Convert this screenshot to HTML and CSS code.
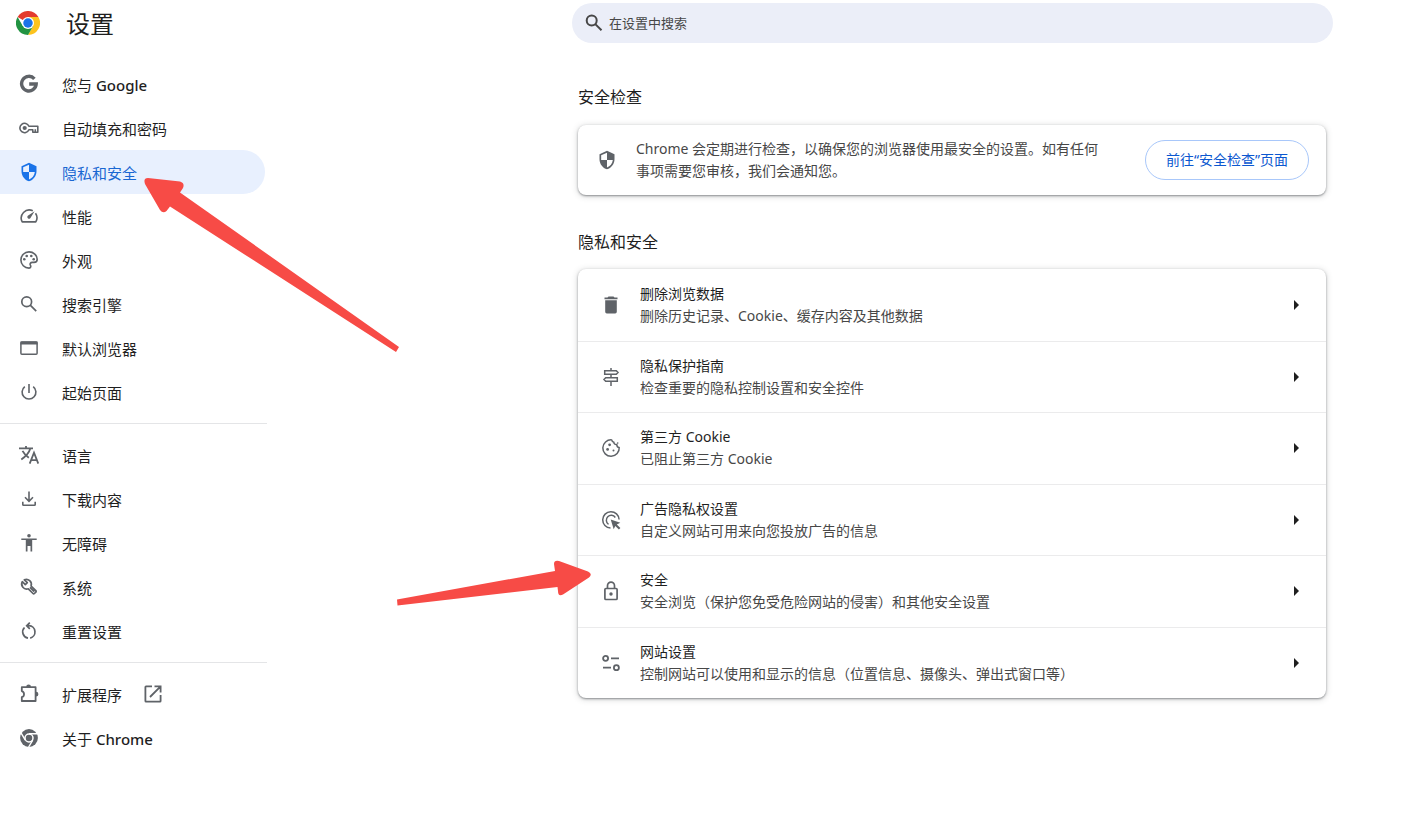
FILE: index.html
```html
<!DOCTYPE html>
<html lang="zh-CN">
<head>
<meta charset="utf-8">
<meta name="viewport" content="width=device-width, initial-scale=1">
<title>设置</title>
<link rel="stylesheet" href="styles.css">
</head>
<body>
<div class="page">
  <aside class="sidebar">
    <header class="brand">
      <svg class="brand-logo" viewBox="0 0 48 48" aria-hidden="true">
        <path fill="#e33b2e" d="M24 24 3.2 12A24 24 0 0 1 44.8 12L24 12Z"/>
        <path fill="#fcc31e" d="M24 12H44.8A24 24 0 0 1 24 48L34.4 30Z"/>
        <path fill="#229342" d="M34.4 30 24 48A24 24 0 0 1 3.2 12L13.6 30Z"/>
        <circle cx="24" cy="24" r="12" fill="#fff"/>
        <circle cx="24" cy="24" r="9.5" fill="#1a73e8"/>
      </svg>
      <h1 class="brand-title">设置</h1>
    </header>
    <nav class="nav" aria-label="设置">
      <a class="nav-item" href="#people">
        <svg class="icon" viewBox="0 0 20 20" aria-hidden="true"><path fill="none" stroke="currentColor" stroke-width="3.400" d="M15.400 4.800A7.300 7.300 0 1 0 17.200 10H10.200"/></svg>
        <span>您与 <b class="latin">Google</b></span></a>
      <a class="nav-item" href="#autofill">
        <svg class="icon" viewBox="0 0 20 20" aria-hidden="true"><path fill="none" stroke="currentColor" stroke-width="1.600" stroke-linejoin="round" d="M9.900 8.200A4.700 4.700 0 1 0 9.900 11.800H13.800V14.200H18.800V8.200ZM16.300 11.300V14.200"/><circle cx="5.700" cy="10" r="2.100" fill="currentColor"/></svg>
        <span>自动填充和密码</span></a>
      <a class="nav-item nav-item-selected" href="#privacy" aria-current="page">
        <svg class="icon" viewBox="0 0 24 24" aria-hidden="true"><path fill="currentColor" d="M12 1 3 5v6c0 5.550 3.840 10.740 9 12 5.160-1.260 9-6.450 9-12V5Zm0 10.990h7c-.53 4.120-3.280 7.790-7 8.940V12H5V6.300l7-3.110Z"/></svg>
        <span>隐私和安全</span></a>
      <a class="nav-item" href="#performance">
        <svg class="icon" viewBox="0 0 20 20" aria-hidden="true"><path fill="none" stroke="currentColor" stroke-width="1.600" stroke-linejoin="round" d="M13.800 4.800A8.100 8.100 0 0 0 3.200 15.900H16.800A8.100 8.100 0 0 0 16.500 7.200"/><path fill="currentColor" d="M15.600 5.200 11.300 12.200A1.700 1.700 0 0 1 8.800 9.800Z"/></svg>
        <span>性能</span></a>
      <a class="nav-item" href="#appearance">
        <svg class="icon" viewBox="0 0 20 20" aria-hidden="true"><path fill="none" stroke="currentColor" stroke-width="1.600" d="M10 1.900A8.100 8.100 0 1 0 10 18.100C12 18.100 12 16.200 11.400 15.200 10.600 13.700 11.600 12.400 13.200 12.400H15C17 12.400 18.200 11.200 18.200 9.200 18.200 5.200 14.500 1.900 10 1.900Z"/><g fill="currentColor"><circle cx="5.300" cy="9.300" r="1.300"/><circle cx="7.700" cy="6" r="1.300"/><circle cx="12.300" cy="6" r="1.300"/><circle cx="14.700" cy="9.300" r="1.300"/></g></svg>
        <span>外观</span></a>
      <a class="nav-item" href="#search">
        <svg class="icon" viewBox="0 0 20 20" aria-hidden="true"><g fill="none" stroke="currentColor" stroke-width="1.700"><circle cx="7.700" cy="7.700" r="4.900"/><path d="m11.200 11.200 6 6"/></g></svg>
        <span>搜索引擎</span></a>
      <a class="nav-item" href="#default-browser">
        <svg class="icon" viewBox="0 0 20 20" aria-hidden="true"><rect x="1.900" y="4" width="16.200" height="12.200" rx="1" fill="none" stroke="currentColor" stroke-width="1.500"/><path fill="currentColor" d="M1.500 3.500h17v3h-17z"/></svg>
        <span>默认浏览器</span></a>
      <a class="nav-item" href="#on-startup">
        <svg class="icon" viewBox="0 0 20 20" aria-hidden="true"><path fill="none" stroke="currentColor" stroke-width="1.600" d="M10 2v9M5.800 4.600A6.900 6.900 0 1 0 14.200 4.600"/></svg>
        <span>起始页面</span></a>
      <hr class="nav-divider">
      <a class="nav-item" href="#languages">
        <svg class="icon" viewBox="0 0 20 20" aria-hidden="true"><g fill="none" stroke="currentColor" stroke-width="1.800"><path d="M0 3.300H14M7 1V3.300M11.300 3.500C10 8.200 7 11.200 2.300 14.500M3.500 5.800C5 8.700 7.200 10.700 9.800 12.700"/><path d="m10.700 18.600 4.300-11 4.300 11M12.200 15.100h5.600"/></g></svg>
        <span>语言</span></a>
      <a class="nav-item" href="#downloads">
        <svg class="icon" viewBox="0 0 20 20" aria-hidden="true"><path fill="none" stroke="currentColor" stroke-width="1.600" d="M10 2.500v9.500M6 8.300l4 4 4-4M3.800 12.800v2.600q0 .8.800.8h10.800q.8 0 .8-.8v-2.600"/></svg>
        <span>下载内容</span></a>
      <a class="nav-item" href="#accessibility">
        <svg class="icon" viewBox="0 0 20 20" aria-hidden="true"><g fill="currentColor"><circle cx="10" cy="2.800" r="1.800"/><path d="M2.300 5.500h15.400v1.600h-4.500v11.500h-1.700v-5.500h-3v5.500H6.800V7.100H2.300Z"/></g></svg>
        <span>无障碍</span></a>
      <a class="nav-item" href="#system">
        <svg class="icon" viewBox="0 0 20 20" aria-hidden="true"><path fill="none" stroke="currentColor" stroke-width="1.700" stroke-linejoin="round" d="M3.300 4.700 6.300 7.700 8.300 5.700 5.300 2.900A5 5 0 0 1 12.100 9L16.800 13.700Q17.500 14.400 16.800 15.100L15.400 16.500Q14.700 17.200 14 16.500L9.300 11.800A5 5 0 0 1 3.300 4.700ZM11 10.400 15.300 14.700"/></svg>
        <span>系统</span></a>
      <a class="nav-item" href="#reset">
        <svg class="icon" viewBox="0 0 20 20" aria-hidden="true"><path fill="none" stroke="currentColor" stroke-width="1.700" d="M9 17.100A6.300 6.300 0 0 1 5.500 6.500M8.300 4.700H10A6.300 6.300 0 0 1 11.200 17.100M10.800 1.600 7.700 4.700l3.100 3.100"/></svg>
        <span>重置设置</span></a>
      <hr class="nav-divider">
      <a class="nav-item" href="#extensions">
        <svg class="icon" viewBox="0 0 20 20" aria-hidden="true"><path fill="none" stroke="currentColor" stroke-width="1.800" stroke-linejoin="round" d="M2.800 3.200H16.600V17H2.800V13.200A3.200 3.200 0 0 0 2.800 7.100Z"/><path fill="currentColor" d="M7.200 3a2.400 2.400 0 0 1 4.800 0ZM17 7.800a2.400 2.400 0 0 1 0 4.800Z"/></svg>
        <span>扩展程序</span>
        <svg class="icon icon-external" viewBox="0 0 20 20" aria-hidden="true"><path fill="none" stroke="currentColor" stroke-width="1.800" d="M9 2.400H3Q2.400 2.400 2.400 3V17Q2.400 17.600 3 17.600H17Q17.600 17.600 17.600 17V11M11.500 2.400H17.600V8.500M17.600 2.400 7 13"/></svg></a>
      <a class="nav-item" href="#about">
        <svg class="icon" viewBox="0 0 20 20" aria-hidden="true"><circle cx="10" cy="10" r="8.900" fill="currentColor"/><circle cx="10" cy="10" r="4" fill="none" stroke="#fff" stroke-width="1.500"/><path fill="none" stroke="#fff" stroke-width="1.400" d="M10 5.700H18.500M13.700 12.200 9.400 19.500M6.300 12.200 2 4.800"/></svg>
        <span>关于 <b class="latin">Chrome</b></span></a>
    </nav>
  </aside>

  <main class="main">
    <div class="column">
      <label class="search">
        <svg class="icon" viewBox="0 0 20 20" aria-hidden="true"><g fill="none" stroke="currentColor" stroke-width="2"><circle cx="7.700" cy="7.500" r="5"/><path d="m11.300 11.100 6.200 6.200"/></g></svg>
        <input class="search-input" type="search" placeholder="在设置中搜索" aria-label="在设置中搜索">
      </label>

      <section class="section">
        <h2 class="section-title">安全检查</h2>
        <div class="card check">
          <svg class="icon check-icon" viewBox="0 0 24 24" aria-hidden="true"><path fill="currentColor" d="M12 1 3 5v6c0 5.550 3.840 10.740 9 12 5.160-1.260 9-6.450 9-12V5Zm0 10.990h7c-.53 4.120-3.280 7.790-7 8.940V12H5V6.300l7-3.110Z"/></svg>
          <p class="check-text">Chrome 会定期进行检查，以确保您的浏览器使用最安全的设置。如有任何事项需要您审核，我们会通知您。</p>
          <button class="check-button" type="button">前往“安全检查”页面</button>
        </div>
      </section>

      <section class="section">
        <h2 class="section-title">隐私和安全</h2>
        <div class="card list">
          <a class="row" href="#clear-data">
            <svg class="icon" viewBox="0 0 20 20" aria-hidden="true"><path fill="currentColor" d="M7.500 1.600h5l1 1h3v1.700h-13V2.600h3ZM4.200 5.300h11.600v11.500q0 1.600-1.600 1.600H5.800q-1.600 0-1.600-1.600Z"/></svg>
            <span class="row-text"><span class="row-title">删除浏览数据</span><span class="row-sub">删除历史记录、Cookie、缓存内容及其他数据</span></span>
            <svg class="chevron" viewBox="0 0 5 10" aria-hidden="true"><path fill="currentColor" d="m0 0 5 5-5 5Z"/></svg></a>
          <a class="row" href="#guide">
            <svg class="icon" viewBox="0 0 20 20" aria-hidden="true"><path fill="none" stroke="currentColor" stroke-width="1.500" d="M10 1v2.500M10 7.500v3.200M10 14.500V19M3.700 3.700H15.300L17 5.500 15.300 7.300H3.700ZM16.300 10.700H4.700L3 12.500 4.700 14.300H16.300Z"/></svg>
            <span class="row-text"><span class="row-title">隐私保护指南</span><span class="row-sub">检查重要的隐私控制设置和安全控件</span></span>
            <svg class="chevron" viewBox="0 0 5 10" aria-hidden="true"><path fill="currentColor" d="m0 0 5 5-5 5Z"/></svg></a>
          <a class="row" href="#cookies">
            <svg class="icon" viewBox="0 0 20 20" aria-hidden="true"><path fill="none" stroke="currentColor" stroke-width="1.500" stroke-linejoin="round" d="M10.700 1.900A8.200 8.200 0 1 0 18.200 9.400C16.800 9.300 15.800 8.300 15.800 6.400 14 6.700 12.700 5.700 12.900 4.200 11.700 4 10.900 3.200 10.700 1.900Z"/><g fill="currentColor"><circle cx="8.600" cy="6.800" r="1.400"/><circle cx="6.600" cy="11.400" r="1.400"/><circle cx="12.500" cy="12.500" r="1"/><circle cx="16.700" cy="5.100" r=".8"/></g></svg>
            <span class="row-text"><span class="row-title">第三方 Cookie</span><span class="row-sub">已阻止第三方 Cookie</span></span>
            <svg class="chevron" viewBox="0 0 5 10" aria-hidden="true"><path fill="currentColor" d="m0 0 5 5-5 5Z"/></svg></a>
          <a class="row" href="#ads">
            <svg class="icon" viewBox="0 0 20 20" aria-hidden="true"><path fill="none" stroke="currentColor" stroke-width="1.500" d="M9.500 18.100A8.200 8.200 0 1 1 18.100 9.500M7.500 14.300A4.900 4.900 0 1 1 14.300 7.500"/><path fill="currentColor" d="m9.700 9.500 9.600 3.200-3.500 1.700 3.600 3.600-1.500 1.500-3.600-3.600-1.600 3.300Z"/></svg>
            <span class="row-text"><span class="row-title">广告隐私权设置</span><span class="row-sub">自定义网站可用来向您投放广告的信息</span></span>
            <svg class="chevron" viewBox="0 0 5 10" aria-hidden="true"><path fill="currentColor" d="m0 0 5 5-5 5Z"/></svg></a>
          <a class="row" href="#security">
            <svg class="icon" viewBox="0 0 20 20" aria-hidden="true"><g fill="none" stroke="currentColor" stroke-width="1.700"><rect x="3.900" y="7.500" width="12.200" height="11" rx="1"/><path d="M6.500 7.500V4.700a3.500 3.500 0 0 1 7 0V7.500"/></g><circle cx="10" cy="13" r="1.700" fill="currentColor"/></svg>
            <span class="row-text"><span class="row-title">安全</span><span class="row-sub">安全浏览（保护您免受危险网站的侵害）和其他安全设置</span></span>
            <svg class="chevron" viewBox="0 0 5 10" aria-hidden="true"><path fill="currentColor" d="m0 0 5 5-5 5Z"/></svg></a>
          <a class="row" href="#site-settings">
            <svg class="icon" viewBox="0 0 20 20" aria-hidden="true"><g fill="none" stroke="currentColor" stroke-width="1.800"><circle cx="4.600" cy="5.300" r="2.500"/><path d="M10 5.300h8M2 14.700h8"/><circle cx="15.400" cy="14.700" r="2.500"/></g></svg>
            <span class="row-text"><span class="row-title">网站设置</span><span class="row-sub">控制网站可以使用和显示的信息（位置信息、摄像头、弹出式窗口等）</span></span>
            <svg class="chevron" viewBox="0 0 5 10" aria-hidden="true"><path fill="currentColor" d="m0 0 5 5-5 5Z"/></svg></a>
        </div>
      </section>
    </div>
  </main>

  <svg class="arrow arrow-nav" viewBox="0 0 256 176" aria-hidden="true">
    <path d="M5 2 37 5.500Q42 7 40 12L37 16.500 256 171 253 176 27 30.500 23.500 35Q20 38 17 34L2 8Q0 2 5 2Z"/>
  </svg>
  <svg class="arrow arrow-row" viewBox="0 0 195 46" aria-hidden="true">
    <path d="M0 39.500 158 11 157 4Q157 0 162 1L191 11.500Q196 14 192 17.500L166 34.500Q161 37 161 31L160.500 27 .5 45.500Z"/>
  </svg>
</div>
</body>
</html>
```

FILE: styles.css
```css
* {
  box-sizing: border-box;
}

body {
  margin: 0;
  background: #fff;
  color: #1f1f1f;
  font-family: "Noto Sans", "Noto Sans CJK SC", sans-serif;
  font-size: 14px;
  line-height: 22px;
}

a {
  color: inherit;
  text-decoration: none;
}

.page {
  position: relative;
  display: flex;
  min-height: 100vh;
}

.icon {
  flex: none;
  width: 20px;
  height: 20px;
  color: #5f6368;
}

/* Sidebar */
.sidebar {
  flex: none;
  width: 267px;
}

.brand {
  display: flex;
  align-items: center;
  gap: 26px;
  height: 46px;
  padding-left: 16px;
}

.brand-logo {
  width: 24px;
  height: 24px;
}

.brand-title {
  margin: 0;
  padding-top: 2px;
  font-size: 24px;
  font-weight: 400;
  line-height: 32px;
}

.nav {
  padding-top: 16px;
}

.nav-item {
  display: flex;
  align-items: center;
  gap: 23px;
  height: 44px;
  margin-right: 2px;
  padding-left: 19px;
  border-radius: 0 22px 22px 0;
  font-size: 15px;
}

.nav-item span {
  padding-top: 2px;
}

.latin {
  font-weight: 500;
}

.nav-item-selected {
  background: #e8f0fe;
  color: #1967d2;
}

.nav-item-selected .icon {
  color: #1a73e8;
}

.icon-external {
  margin-left: -2px;
}

.nav-divider {
  height: 1px;
  margin: 9px 0;
  border: 0;
  background: #e4e5e7;
}

/* Main column */
.main {
  flex: 1;
  min-width: 0;
  padding: 3px 0 24px 212px;
}

.column {
  max-width: 761px;
  margin: 0 auto;
}

.search {
  display: flex;
  align-items: center;
  gap: 5px;
  height: 40px;
  padding: 0 12px;
  border-radius: 20px;
  background: #ebeef8;
}

.search .icon {
  color: #474747;
}

.search-input {
  flex: 1;
  min-width: 0;
  padding: 0;
  border: 0;
  outline: 0;
  background: none;
  color: #1f1f1f;
  font: inherit;
  font-size: 13px;
}

.search-input::placeholder {
  color: #474747;
  opacity: 1;
}

.section {
  padding: 0 7px 0 6px;
}

.section-title {
  margin: 0;
  padding: 42px 0 16px;
  font-size: 16px;
  font-weight: 400;
  line-height: 24px;
}

.section + .section .section-title {
  padding: 35px 0 15px;
}

.card {
  border-radius: 8px;
  background: #fff;
  box-shadow: 0 1px 2px rgba(60, 64, 67, .5), 0 1px 6px rgba(60, 64, 67, .25);
}

.check {
  display: flex;
  align-items: center;
  min-height: 70px;
  padding: 13px 17px 13px 19px;
}

.check-text {
  flex: 1;
  margin: 0 40px 0 19px;
  color: #474747;
}

.check-button {
  flex: none;
  height: 40px;
  padding: 0 20px;
  border: 1px solid #a8c7fa;
  border-radius: 20px;
  background: #fff;
  color: #0b57d0;
  font: inherit;
}

.list {
  display: grid;
  grid-auto-rows: 1fr;
  min-height: 429px;
}

.row {
  display: flex;
  align-items: center;
  padding: 0 27px 0 23px;
}

.row + .row {
  border-top: 1px solid #ebebec;
}

.row-text {
  display: flex;
  flex: 1;
  flex-direction: column;
  margin-left: 19px;
}

.row-sub {
  color: #474747;
}

.chevron {
  flex: none;
  width: 5px;
  height: 10px;
}

/* Callout arrows drawn over the page */
.arrow {
  position: absolute;
  fill: #f74b46;
  pointer-events: none;
}

.arrow-nav {
  top: 176px;
  left: 143px;
  width: 256px;
  height: 176px;
}

.arrow-row {
  top: 560px;
  left: 397px;
  width: 195px;
  height: 46px;
}
```
